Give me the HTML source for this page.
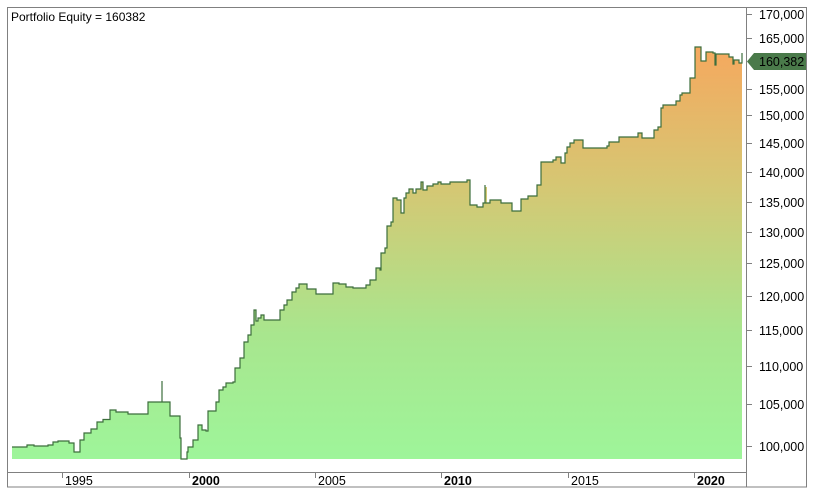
<!DOCTYPE html>
<html><head><meta charset="utf-8"><style>
html,body{margin:0;padding:0;background:#fff;width:815px;height:494px;overflow:hidden}
</style></head><body>
<svg width="815" height="494" viewBox="0 0 815 494" xmlns="http://www.w3.org/2000/svg" font-family="Liberation Sans, Arial, sans-serif">
<defs>
<linearGradient id="g" gradientUnits="userSpaceOnUse" x1="0" y1="46" x2="0" y2="459">
<stop offset="0" stop-color="#f6a85e"/>
<stop offset="0.35" stop-color="#d4c874"/>
<stop offset="0.7" stop-color="#a8e68e"/>
<stop offset="1" stop-color="#9ef59a"/>
</linearGradient>
</defs>
<rect x="7.5" y="7.5" width="799" height="479.5" fill="#fff" stroke="#808080"/>
<line x1="746.5" y1="7" x2="746.5" y2="487" stroke="#808080"/>
<line x1="7" y1="472.5" x2="746" y2="472.5" stroke="#808080"/>
<text x="11" y="21" font-size="12" fill="#000">Portfolio Equity = 160382</text>
<path id="eq" d="M12,459 L12,447 H27 V445 H34 V446 H48 V445 H53 V442 H58 V441 H69 V443 H74 V452 H80 V440 H84 V433 H91 V429 H97 V422 H103 V419.5 H110 V410 H116 V412 H128 V414 H148 V402 H170 V416 H180 V438 H181 V459 H187 V452 H188 V447 H193 V440 H198 V425 H202 V430 H206 V431 H208 V411 H216 V402 H219 V390 H223 V387 H226 V383 H233 V382 H235 V368 H240 V358 H244 V342 H248 V335 H251 V325 H254 V310 H256 V321 H258 V318 H261 V315 H264 V320 H280 V310 H284 V305 H287 V300 H292 V292 H296 V288 H299 V284 H307 V289 H316 V294 H333 V283 H339 V284 H346 V287 H353 V288 H366 V285 H370 V280 H376 V268 H380 V270 H381 V253 H385 V248 H387 V226 H391 V222 H393 V198 H397 V200 H401 V213 H404 V198 H406 V193 H409 V189 H413 V193 H416 V189 H421 V182 H423 V190 H427 V186 H433 V184 H438 V182 H441 V184 H450 V182 H467 V180 H470 V205 H477 V207 H483 V203 H485 V187 H487 V203 H490 V200 H501 V203 H512 V211 H521 V199 H528 V196 H537 V185 H541 V162 H553 V160 H556 V157 H561 V163 H565 V153 H567 V147 H570 V143 H574 V140 H583 V148 H607 V146 H609 V142 H619 V137 H638 V133 H642 V138 H654 V130 H658 V127 H661 V108 H663 V105 H676 V101 H680 V95 H682 V93 H690 V78 H695 V47 H701 V61 H706 V52 H713 V53 H715 V65 H716 V54 H729 V57 H733 V64 H734 V60 H739 V63 H742 V459 Z" fill="url(#g)" stroke="none"/>
<path d="M12,447 H27 V445 H34 V446 H48 V445 H53 V442 H58 V441 H69 V443 H74 V452 H80 V440 H84 V433 H91 V429 H97 V422 H103 V419.5 H110 V410 H116 V412 H128 V414 H148 V402 H162 V381 V402 H170 V416 H180 V438 H181 V459 H187 V452 H188 V447 H193 V440 H198 V425 H202 V430 H206 V431 H208 V411 H216 V402 H219 V390 H223 V387 H226 V383 H233 V382 H235 V368 H240 V358 H244 V342 H248 V335 H251 V325 H254 V310 H256 V321 H258 V318 H261 V315 H264 V320 H280 V310 H284 V305 H287 V300 H292 V292 H296 V288 H299 V284 H307 V289 H316 V294 H333 V283 H339 V284 H346 V287 H353 V288 H366 V285 H370 V280 H376 V268 H380 V270 H381 V253 H385 V248 H387 V226 H391 V222 H393 V198 H397 V200 H401 V213 H404 V198 H406 V193 H409 V189 H413 V193 H416 V189 H421 V182 H423 V190 H427 V186 H433 V184 H438 V182 H441 V184 H450 V182 H467 V180 H470 V205 H477 V207 H483 V203 H485 V185 V203 H487 H490 V200 H501 V203 H512 V211 H521 V199 H528 V196 H537 V185 H541 V162 H553 V160 H556 V157 H561 V163 H565 V153 H567 V147 H570 V143 H574 V140 H583 V148 H607 V146 H609 V142 H619 V137 H638 V133 H642 V138 H654 V130 H658 V127 H661 V108 H663 V105 H676 V101 H680 V95 H682 V93 H690 V78 H695 V47 H701 V61 H706 V52 H713 V53 H715 V65 H716 V54 H729 V57 H733 V64 H734 V60 H739 V63 H742 V53 V63" fill="none" stroke="#3c6e3c" stroke-width="1.2"/>
<g font-size="12.5" fill="#000" stroke="#808080">
<line x1="747" y1="14.5" x2="752" y2="14.5"/><text x="759" y="19" stroke="none">170,000</text>
<line x1="747" y1="38.5" x2="752" y2="38.5"/><text x="759" y="43" stroke="none">165,000</text>
<line x1="747" y1="89.5" x2="752" y2="89.5"/><text x="759" y="94" stroke="none">155,000</text>
<line x1="747" y1="115.5" x2="752" y2="115.5"/><text x="759" y="120" stroke="none">150,000</text>
<line x1="747" y1="143.5" x2="752" y2="143.5"/><text x="759" y="148" stroke="none">145,000</text>
<line x1="747" y1="172.5" x2="752" y2="172.5"/><text x="759" y="177" stroke="none">140,000</text>
<line x1="747" y1="202.5" x2="752" y2="202.5"/><text x="759" y="207" stroke="none">135,000</text>
<line x1="747" y1="232.5" x2="752" y2="232.5"/><text x="759" y="237" stroke="none">130,000</text>
<line x1="747" y1="263.5" x2="752" y2="263.5"/><text x="759" y="268" stroke="none">125,000</text>
<line x1="747" y1="296.5" x2="752" y2="296.5"/><text x="759" y="301" stroke="none">120,000</text>
<line x1="747" y1="330.5" x2="752" y2="330.5"/><text x="759" y="335" stroke="none">115,000</text>
<line x1="747" y1="366.5" x2="752" y2="366.5"/><text x="759" y="371" stroke="none">110,000</text>
<line x1="747" y1="404.5" x2="752" y2="404.5"/><text x="759" y="409" stroke="none">105,000</text>
<line x1="747" y1="446.5" x2="752" y2="446.5"/><text x="759" y="451" stroke="none">100,000</text>
</g>
<path d="M747,61.5 L754,53 H806 V70 H754 Z" fill="#4a7a4a"/>
<text x="759" y="66" font-size="12.5" fill="#000">160,382</text>
<g font-size="12.5" fill="#000" stroke="#808080">
<line x1="62.5" y1="473" x2="62.5" y2="478"/><text x="65" y="485" stroke="none">1995</text>
<line x1="189.5" y1="473" x2="189.5" y2="478"/><text x="192" y="485" stroke="none" font-weight="bold">2000</text>
<line x1="315.5" y1="473" x2="315.5" y2="478"/><text x="318" y="485" stroke="none">2005</text>
<line x1="441.5" y1="473" x2="441.5" y2="478"/><text x="444" y="485" stroke="none" font-weight="bold">2010</text>
<line x1="568.5" y1="473" x2="568.5" y2="478"/><text x="571" y="485" stroke="none">2015</text>
<line x1="694.5" y1="473" x2="694.5" y2="478"/><text x="697" y="485" stroke="none" font-weight="bold">2020</text>
</g>
</svg>
</body></html>
